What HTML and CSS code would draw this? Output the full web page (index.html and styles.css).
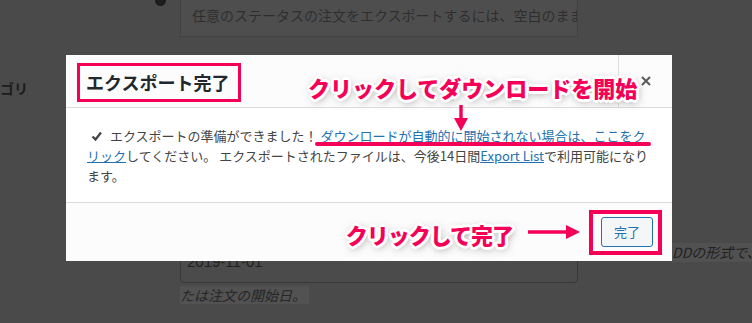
FILE: index.html
```html
<!DOCTYPE html>
<html lang="ja">
<head>
<meta charset="utf-8">
<title>エクスポート完了</title>
<link rel="stylesheet" href="styles.css">
</head>
<body>
<div class="page">
  <div class="admin">
    <div class="row1">
      <span class="help"></span>
      <div class="field1">任意のステータスの注文をエクスポートするには、空白のままにしてください。</div>
    </div>
    <div class="row2"><span class="label">カテゴリ</span></div>
    <div class="row3">
      <div class="field2">2019-11-01</div>
      <span class="desc-right">DDの形式で、エクスポートする注文の開始日</span>
    </div>
    <div class="row4"><span class="desc">たは注文の開始日。</span></div>
  </div>

  <div class="modal">
    <div class="modal-header">
      <h1 class="modal-title">エクスポート完了</h1>
      <button class="close" aria-label="閉じる">
        <svg width="10" height="10" viewBox="0 0 10 10"><path d="M1 1 L9 9 M9 1 L1 9" stroke="#5a5a5a" stroke-width="2" fill="none"/></svg>
      </button>
    </div>
    <div class="modal-body">
      <p class="msg"><svg class="check" width="20" height="14" viewBox="0 0 20 14"><path d="M5.5 7.5 L8.5 10.5 L14 3.5" stroke="#444" stroke-width="2.2" fill="none"/></svg> エクスポートの準備ができました！ <a href="#" class="link">ダウンロードが自動的に開始されない場合は、ここをク<br>リック</a>してください。 エクスポートされたファイルは、今後14日間<a href="#" class="link">Export List</a>で利用可能になり<br>ます。</p>
    </div>
    <div class="modal-footer">
      <span class="note note2">クリックして完了</span>
      <svg class="arrow-right" width="52" height="16" viewBox="0 0 52 16"><path d="M0 8 H40" stroke="#f50057" stroke-width="3.4"/><path d="M38 1 L52 8 L38 15 Z" fill="#f50057"/></svg>
      <span class="btn-mark"><button class="done">完了</button></span>
    </div>
  </div>

  <span class="note note1">クリックしてダウンロードを開始</span>
  <svg class="arrow-down" width="16" height="26" viewBox="0 0 16 26"><path d="M8 0 V15" stroke="#f50057" stroke-width="3.4"/><path d="M1 13 L8 26 L15 13 Z" fill="#f50057"/></svg>
  <span class="underline-mark"></span>
</div>
</body>
</html>
```

FILE: styles.css
```css
html, body {
  margin: 0;
  padding: 0;
}
body {
  background: #4a4a4a;
  font-family: "Noto Sans CJK JP", "Noto Sans", sans-serif;
}
.page {
  position: relative;
  width: 752px;
  height: 323px;
  overflow: hidden;
  background: #4a4a4a;
}

/* dimmed admin page behind */
.admin {
  color: #262626;
  font-size: 14px;
}
.row1 {
  display: flex;
  align-items: flex-start;
  margin-top: -22px;
}
.help {
  width: 11px;
  height: 11px;
  border-radius: 50%;
  background: #1d1d1d;
  margin: 17px 14px 0 155px;
  flex: none;
}
.field1 {
  width: 398px;
  height: 59px;
  box-sizing: border-box;
  border: 1px solid #424242;
  background: #4e4e4e;
  padding: 26px 0 0 11px;
  line-height: 20px;
  white-space: nowrap;
  overflow: hidden;
  color: #2e2e2e;
  flex: none;
}
.row2 {
  margin-top: 41px;
  line-height: 20px;
}
.label {
  display: inline-block;
  margin-left: -28px;
  font-weight: 700;
  color: #1c1c1c;
}
.row3 {
  display: flex;
  align-items: flex-start;
  margin-top: 145px;
  padding-left: 180px;
}
.field2 {
  width: 398px;
  height: 40px;
  box-sizing: border-box;
  border: 1px solid #383838;
  border-radius: 4px;
  background: #4b4b4b;
  padding-left: 6px;
  line-height: 36px;
  font-family: "Liberation Sans", "Noto Sans CJK JP", sans-serif;
  font-size: 15px;
  color: #222;
  flex: none;
}
.desc-right {
  margin-left: 94px;
  background: #515151;
  line-height: 19px;
  font-style: italic;
  white-space: nowrap;
  color: #222;
}
.row4 {
  padding-left: 180px;
  margin-top: 2px;
}
.desc {
  display: inline-block;
  background: #525252;
  line-height: 18px;
  font-style: italic;
  color: #262626;
  padding-right: 3px;
}

/* modal */
.modal {
  position: absolute;
  left: 66px;
  top: 55px;
  width: 606px;
  height: 206px;
  background: #fff;
  display: flex;
  flex-direction: column;
}
.modal-header {
  display: flex;
  align-items: flex-start;
  height: 53px;
  box-sizing: border-box;
  border-bottom: 1px solid #dcdcdc;
  background: #fcfcfc;
}
.modal-title {
  margin: 8px 0 0 11px;
  border: 3px solid #f50057;
  padding: 0 9px 0 6px;
  font-size: 18px;
  line-height: 33px;
  font-weight: 700;
  color: #23282d;
}
.close {
  margin-left: auto;
  width: 54px;
  height: 52px;
  border: 0;
  border-left: 1px solid #dcdcdc;
  background: transparent;
  padding: 0;
  display: flex;
  align-items: center;
  justify-content: center;
}
.modal-body {
  flex: 1;
  padding: 18px 10px 0 21px;
  background: #fff;
}
.msg {
  margin: 0;
  font-size: 13px;
  line-height: 20px;
  color: #444;
}
.check {
  vertical-align: -2px;
}
.link {
  color: #2271b1;
  text-decoration: underline;
}
.modal-footer {
  height: 59px;
  box-sizing: border-box;
  border-top: 1px solid #dcdcdc;
  background: #fcfcfc;
  display: flex;
  align-items: center;
  justify-content: flex-end;
  padding-right: 10px;
}
.arrow-right {
  margin: 0 9px 0 15px;
  flex: none;
}
.btn-mark {
  display: flex;
  border: 4px solid #f50057;
  padding: 3px 5px 4px 8px;
}
.done {
  height: 30px;
  padding: 0 12px;
  border: 1px solid #2271b1;
  border-radius: 3px;
  background: #f4f6f7;
  color: #2271b1;
  font-family: "Noto Sans CJK JP", "Noto Sans", sans-serif;
  font-size: 13px;
  line-height: 28px;
}

/* annotations */
.note {
  font-size: 22px;
  line-height: 22px;
  font-weight: 900;
  color: #f50057;
  white-space: nowrap;
  text-shadow:
    2px 0 0 #fff, -2px 0 0 #fff, 0 2px 0 #fff, 0 -2px 0 #fff,
    2px 2px 0 #fff, -2px -2px 0 #fff, 2px -2px 0 #fff, -2px 2px 0 #fff,
    3px 0 0 #fff, -3px 0 0 #fff, 0 3px 0 #fff, 0 -3px 0 #fff,
    1px 2px 8px rgba(0, 0, 0, 0.55);
}
.note1 {
  position: absolute;
  left: 308px;
  top: 76px;
}
.note2 {
  letter-spacing: -1px;
  margin-bottom: -4px;
}
.arrow-down {
  position: absolute;
  left: 453px;
  top: 105px;
}
.underline-mark {
  position: absolute;
  left: 315px;
  top: 142px;
  width: 336px;
  height: 4px;
  border-radius: 2px;
  background: #f50057;
}
```
